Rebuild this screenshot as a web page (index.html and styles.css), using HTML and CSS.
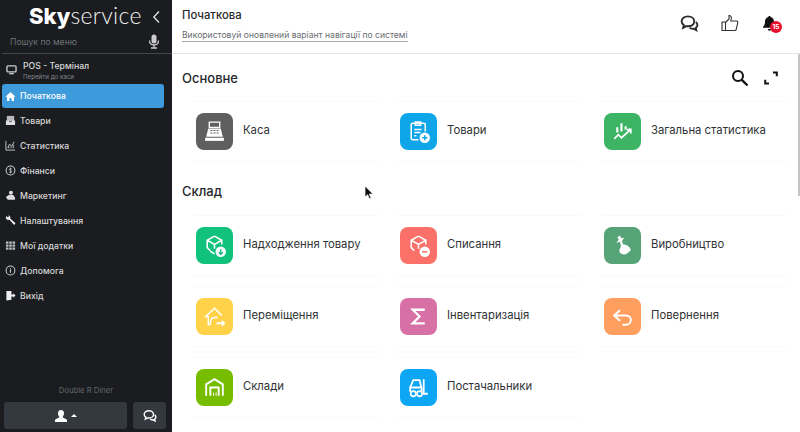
FILE: index.html
```html
<!DOCTYPE html>
<html lang="uk">
<head>
    <meta charset="UTF-8">
    <meta name="viewport" content="width=device-width, initial-scale=1.0">
    <title>Skyservice</title>
    <link rel="stylesheet" href="styles.css">
</head>
<body>
    <aside class="sidebar">
        <div class="logo-row">
            <div class="logo"><b>Sky</b>service</div>
            <svg class="back" width="9" height="14" viewBox="0 0 9 14"><path d="M7 1.500 1.800 7 7 12.500" fill="none" stroke="#e8e8e8" stroke-width="1.300"/></svg>
        </div>
        <div class="search-row">
            <span>Пошук по меню</span>
            <svg width="12" height="15" viewBox="0 0 12 15"><rect x="3.500" y="0.500" width="5" height="9" rx="2.500" fill="#ccc"/><path d="M1.500 6.500c0 6 9 6 9 0M6 11v2.500M3 14h6" fill="none" stroke="#ccc" stroke-width="1.300"/></svg>
        </div>
        <div class="pos-row">
            <svg class="pos-icon" width="11" height="10" viewBox="0 0 12 11"><rect x="1" y="1" width="10" height="6.500" rx="1" fill="none" stroke="#ccc" stroke-width="1.500"/><path d="M3.500 9.500h5" stroke="#ccc" stroke-width="1.500"/></svg>
            <div>
                <div class="pos-title">POS - Термінал</div>
                <div class="pos-sub">Перейти до каси</div>
            </div>
        </div>
        <nav class="menu">
            <a class="menu-item active">
                <svg viewBox="0 0 12 12"><path d="M6 1 .5 6.200h1.700V11h2.600V7.800h2.400V11h2.600V6.200h1.700z" fill="#fff"/></svg>
                Початкова
            </a>
            <a class="menu-item">
                <svg viewBox="0 0 12 12"><path d="M2 1h8v6H2z" fill="#bbb"/><path d="M1 6h3l1 1.500h2L8 6h3v5H1z" fill="#ddd"/></svg>
                Товари
            </a>
            <a class="menu-item">
                <svg viewBox="0 0 12 12"><path d="M1 1v10h10M3 8.500l2-4 2 2.500 3-5M4 9V7M6.500 9V7.500M9 9V5" fill="none" stroke="#ccc" stroke-width="1"/></svg>
                Статистика
            </a>
            <a class="menu-item">
                <svg viewBox="0 0 12 12"><circle cx="6" cy="6" r="4.800" fill="none" stroke="#ccc" stroke-width="1.100"/><path d="M7.500 4.400C7 3.700 4.700 3.600 4.700 4.800S7.400 5.900 7.400 7.200 5 8.400 4.400 7.500M6 2.800v6.400" fill="none" stroke="#ccc" stroke-width=".8"/></svg>
                Фінанси
            </a>
            <a class="menu-item">
                <svg viewBox="0 0 12 12"><circle cx="6.500" cy="3" r="2.200" fill="#ddd"/><path d="M1 7.500 4 5.500h5l2 3v2H3z" fill="#ddd"/></svg>
                Маркетинг
            </a>
            <a class="menu-item">
                <svg viewBox="0 0 12 12"><path d="M.8 3.500 1.500 1 3 2.500l1.300-.7L3.500.5l1.500.2 1 1.800-.3 1.300 5.800 5.200L10 11 4.800 5.300l-2 .2z" fill="#eee"/></svg>
                Налаштування
            </a>
            <a class="menu-item">
                <svg viewBox="0 0 12 12"><path d="M1 1.500h2.800v2.500H1zM4.600 1.500h2.800v2.500H4.600zM8.200 1.500H11v2.500H8.200zM1 4.800h2.800v2.500H1zM4.600 4.800h2.800v2.500H4.600zM8.200 4.800H11v2.500H8.200zM1 8.100h2.800v2.500H1zM4.600 8.100h2.800v2.500H4.600zM8.200 8.100H11v2.500H8.200z" fill="#bbb"/></svg>
                Мої додатки
            </a>
            <a class="menu-item">
                <svg viewBox="0 0 12 12"><circle cx="6" cy="6" r="4.800" fill="none" stroke="#ccc" stroke-width="1.100"/><path d="M6 5v3.500M6 3.200v1" stroke="#ccc" stroke-width="1.200"/></svg>
                Допомога
            </a>
            <a class="menu-item">
                <svg viewBox="0 0 12 12"><path d="M1.500 1H7v4h2V3.500L11.500 6 9 8.500V7H7v3.500L1.500 11.500z" fill="#eee"/></svg>
                Вихід
            </a>
        </nav>
        <div class="company">Double R Diner</div>
        <div class="bottom-row">
            <div class="user-btn">
                <svg width="14" height="14" viewBox="0 0 14 14"><path d="M7 1c2 0 3 1.500 3 3.200S9 7.500 8.500 8c0 1 4.500 1.500 4.500 3.500V13H1v-1.500C1 9.500 5.500 9 5.500 8 5 7.500 4 6 4 4.200S5 1 7 1z" fill="#fff"/></svg>
                <span class="caret"></span>
            </div>
            <div class="chat-btn">
                <svg width="14" height="14" viewBox="0 0 24 24"><path d="M10 3c4.500 0 8 2.700 8 6.300s-3.500 6.200-8 6.200c-.8 0-1.500 0-2.200-.2L4 17.500l.8-3.500C3 12.800 2 11.200 2 9.300 2 5.700 5.500 3 10 3zM20 10c1.300 1 2 2.300 2 3.800 0 1.500-.8 2.800-2 3.700l.6 3-3.600-2c-2 .2-3.800-.3-5-1.300" fill="none" stroke="#fff" stroke-width="2.400"/></svg>
            </div>
        </div>
    </aside>

    <main class="main">
        <header class="topbar">
            <div>
                <div class="page-title">Початкова</div>
                <a class="page-link">Використовуй оновлений варіант навігації по системі</a>
            </div>
            <div class="top-icons">
                <svg width="19" height="19" viewBox="0 0 24 24"><path d="M10 3c4.500 0 8 2.700 8 6.300s-3.500 6.200-8 6.200c-.8 0-1.500 0-2.200-.2L4 17.500l.8-3.500C3 12.800 2 11.200 2 9.300 2 5.700 5.500 3 10 3zM20 10c1.300 1 2 2.300 2 3.800 0 1.500-.8 2.800-2 3.700l.6 3-3.600-2c-2 .2-3.800-.3-5-1.300" fill="none" stroke="#2a2a2a" stroke-width="2.400"/></svg>
                <svg width="18" height="18" viewBox="0 0 18 18"><path d="M1 8h3.500v8.500H1zM4.500 8.500 8 5V1.500c2 0 2.500 1.500 2.300 3L9.800 7H15.500c1 0 1.500 1 1.200 2l-1.500 6.500c-.2.700-.7 1-1.400 1H4.500" fill="none" stroke="#333" stroke-width="1.100"/></svg>
                <div class="bell">
                    <svg width="15" height="16" viewBox="0 0 15 16"><path d="M7.500 1c.8 0 1.200.5 1.200 1 2.300.6 3.300 2.500 3.300 4.800 0 3 1 4 2 5v1H1v-1c1-1 2-2 2-5 0-2.300 1-4.200 3.300-4.800 0-.5.400-1 1.200-1zM5.800 14h3.400c0 1-.8 1.700-1.700 1.700S5.800 15 5.800 14z" fill="#111"/></svg>
                    <span class="badge">15</span>
                </div>
            </div>
        </header>

        <section class="content">
            <div class="section-head">
                <h2>Основне</h2>
                <div class="section-tools">
                    <svg width="18" height="18" viewBox="0 0 18 18"><circle cx="7" cy="7" r="5" fill="none" stroke="#111" stroke-width="2"/><path d="m10.800 10.800 5.700 5.700" stroke="#111" stroke-width="2.400"/></svg>
                    <svg width="14" height="14" viewBox="0 0 14 14"><path d="M9 1.500h3.800v3.800M1.200 8.700v3.800H5" fill="none" stroke="#111" stroke-width="2"/></svg>
                </div>
            </div>
            <div class="tile-grid">
                <div class="tile">
                    <div class="tile-icon grey"><svg viewBox="0 0 24 24"><path d="M7 3h10v5H7z" fill="none" stroke="#fff" stroke-width="1.300"/><path d="M6 9h12l2 8H4z" fill="#fff"/><path d="M3 18h18v3H3z" fill="#fff"/><path d="M8 11h2M11 11h2M14 11h2M8 13.500h2M11 13.500h2M14 13.500h2" stroke="#666" stroke-width="1"/></svg></div>
                    <span class="tile-label">Каса</span>
                </div>
                <div class="tile">
                    <div class="tile-icon sky"><svg viewBox="0 0 24 24"><path d="M12 20H6.500A1.500 1.500 0 0 1 5 18.500v-13A1.500 1.500 0 0 1 6.500 4H17a1.500 1.500 0 0 1 1.500 1.500V12M9 3h5v3H9zM8 10h7M8 13h6M8 16h2" fill="none" stroke="#fff" stroke-width="1.500"/><circle cx="18" cy="18" r="5" fill="#fff"/><path d="M18 15.500v5M15.500 18h5" stroke="#0ea5e9" stroke-width="1.400"/></svg></div>
                    <span class="tile-label">Товари</span>
                </div>
                <div class="tile">
                    <div class="tile-icon green"><svg viewBox="0 0 24 24"><path d="M7 8v5M11 4v8M15 7v3M19 9v3" stroke="#fff" stroke-width="2"/><path d="m4 19 4-4 3 3 8-7M16 10.500l4-.5v4" fill="none" stroke="#fff" stroke-width="1.600"/></svg></div>
                    <span class="tile-label">Загальна статистика</span>
                </div>
            </div>

            <h2 class="second-head">Склад</h2>
            <div class="tile-grid">
                <div class="tile">
                    <div class="tile-icon mint"><svg viewBox="0 0 24 24"><path d="M12 3 5 7v7l3 3M12 3l7 4v4M5 7l7 4 7-4M12 11v4" fill="none" stroke="#fff" stroke-width="1.500"/><path d="M8 17.500 12 20" stroke="#fff" stroke-width="1.500"/><circle cx="18" cy="18" r="5" fill="#fff"/><path d="M18 15.500v5M16 18.500l2 2 2-2" fill="none" stroke="#10b981" stroke-width="1.300"/></svg></div>
                    <span class="tile-label">Надходження товару</span>
                </div>
                <div class="tile">
                    <div class="tile-icon coral"><svg viewBox="0 0 24 24"><path d="M12 3 5 7v7l3 3M12 3l7 4v4M5 7l7 4 7-4M12 11v4" fill="none" stroke="#fff" stroke-width="1.500"/><circle cx="18" cy="18" r="5" fill="#fff"/><path d="M15.500 18h5" stroke="#fb7169" stroke-width="1.500"/></svg></div>
                    <span class="tile-label">Списання</span>
                </div>
                <div class="tile">
                    <div class="tile-icon forest"><svg viewBox="0 0 24 24"><path d="m7 4 2.500-1.500L11 5l2.500-.5L11.500 8l1.300 3c3.700 0 6.700 2.500 7.200 5.500L15.500 20.500c-3 .5-6.500-.5-6.500-3.500 0-2 1.500-3 1.500-4.500L9.500 8.500 6 9.500l2.500-3z" fill="#fff"/></svg></div>
                    <span class="tile-label">Виробництво</span>
                </div>
                <div class="tile">
                    <div class="tile-icon yellow"><svg viewBox="0 0 24 24"><path d="M8 20H6v-8H3.500L12 4l7 7M8 20c-.500-4 1-7 4-7h3" fill="none" stroke="#fff" stroke-width="1.400"/><path d="M14 17.500h5v-2.500l3.500 3.500-3.500 3.500v-2.500h-5z" fill="#fff"/></svg></div>
                    <span class="tile-label">Переміщення</span>
                </div>
                <div class="tile">
                    <div class="tile-icon pink"><svg viewBox="0 0 24 24"><path d="M18 5.500H6.500L13 12l-6.500 6.500H18" fill="none" stroke="#fff" stroke-width="2.200"/></svg></div>
                    <span class="tile-label">Інвентаризація</span>
                </div>
                <div class="tile">
                    <div class="tile-icon orange"><svg viewBox="0 0 24 24"><path d="M9.500 6 4 11l5.500 5M4.500 11H15c3 0 5 1.800 5 4.300S18 20 15 20h-3" fill="none" stroke="#fff" stroke-width="1.900"/></svg></div>
                    <span class="tile-label">Повернення</span>
                </div>
                <div class="tile">
                    <div class="tile-icon lime"><svg viewBox="0 0 24 24"><path d="M4 20V9l8-5 8 5v11M8 20v-8h8v8" fill="none" stroke="#fff" stroke-width="1.800"/><path d="M10.500 17h1v3h-1zM13 17h1v3h-1z" fill="#fff"/></svg></div>
                    <span class="tile-label">Склади</span>
                </div>
                <div class="tile">
                    <div class="tile-icon blue"><svg viewBox="0 0 24 24"><path d="M4 16v-4l3-7h6l2 8v3M5 12h9M17 4v14h4" fill="none" stroke="#fff" stroke-width="1.700"/><circle cx="7" cy="18" r="2.500" fill="none" stroke="#fff" stroke-width="1.500"/><circle cx="13" cy="18" r="2.500" fill="none" stroke="#fff" stroke-width="1.500"/></svg></div>
                    <span class="tile-label">Постачальники</span>
                </div>
            </div>
        </section>
        <div class="scroll-thumb"></div>
    </main>

    <svg class="pointer" width="10" height="15" viewBox="0 0 10 15"><path d="M1 1v11l2.600-2.300 1.800 4 1.700-.8-1.800-3.800H9z" fill="#111" stroke="#fff" stroke-width=".7"/></svg>
</body>
</html>
```

FILE: styles.css
```css
* {
    box-sizing: border-box;
}

body {
    margin: 0;
    width: 800px;
    height: 432px;
    display: flex;
    overflow: hidden;
    background-color: #fff;
    font-family: Inter, "Noto Sans", sans-serif;
    color: #26282b;
}

.sidebar {
    width: 172px;
    height: 432px;
    flex-shrink: 0;
    display: flex;
    flex-direction: column;
    background-color: #1a1c20;
    color: #d8d8d8;
}

.logo-row {
    height: 30px;
    padding: 0 11px 0 29px;
    display: flex;
    align-items: center;
    justify-content: space-between;
}

.logo {
    margin-top: -1px;
    font-family: Lato, sans-serif;
    font-size: 23px;
    font-weight: 300;
    letter-spacing: 0.3px;
    color: #f2f2f2;
}

.logo b {
    font-family: Inter, sans-serif;
    font-size: 22px;
    font-weight: 800;
    letter-spacing: 0;
    color: #fff;
}

.back {
    margin-top: 4px;
}

.search-row {
    height: 24px;
    margin: 0 0 0 2px;
    padding: 0 12px 0 8px;
    display: flex;
    align-items: center;
    justify-content: space-between;
    border-bottom: 1px solid #44474b;
    font-size: 8.600px;
    color: #6e7276;
}

.pos-row {
    height: 28px;
    padding: 7px 0 0 6px;
    display: flex;
    align-items: flex-start;
    gap: 6px;
}

.pos-icon {
    margin-top: 4px;
}

.pos-title {
    font-size: 8.700px;
    font-weight: 500;
    line-height: 11px;
    color: #d8d8d8;
}

.pos-sub {
    margin-top: 1px;
    font-size: 6.200px;
    line-height: 8px;
    color: #85888c;
}

.menu {
    display: flex;
    flex-direction: column;
    padding: 0 8px 0 2px;
}

.menu-item {
    height: 25px;
    padding-left: 3px;
    display: flex;
    align-items: center;
    gap: 4px;
    border-radius: 3px;
    font-size: 8.700px;
    font-weight: 500;
    color: #d8d8d8;
}

.menu-item svg {
    width: 11px;
    height: 11px;
}

.menu-item.active {
    height: 24px;
    margin-top: 2px;
    background-color: #3d9bdc;
    color: #fff;
}

.company {
    margin-top: auto;
    text-align: center;
    font-size: 7.700px;
    color: #63676b;
}

.bottom-row {
    margin: 7px 6px 3px 4px;
    display: flex;
    gap: 6px;
}

.user-btn,
.chat-btn {
    height: 27px;
    display: flex;
    align-items: center;
    justify-content: center;
    border-radius: 3px;
    background-color: #34393f;
}

.user-btn {
    flex: 1;
    gap: 3px;
}

.chat-btn {
    width: 33px;
}

.caret {
    width: 0;
    height: 0;
    border-left: 3px solid transparent;
    border-right: 3px solid transparent;
    border-bottom: 3px solid #fff;
}

.main {
    position: relative;
    flex: 1;
    height: 432px;
}

.topbar {
    height: 54px;
    padding: 8px 21px 0 10px;
    display: flex;
    justify-content: space-between;
    border-bottom: 1px solid #e6e6e6;
}

.page-title {
    font-size: 11.300px;
    line-height: 14px;
    font-weight: 500;
    color: #26282b;
}

.page-link {
    display: inline-block;
    margin-top: 6px;
    font-size: 8.600px;
    line-height: 11px;
    color: #6a6d70;
    border-bottom: 1px solid #a8a8a8;
}

.top-icons {
    display: flex;
    align-items: center;
    gap: 22px;
    height: 30px;
}

.bell {
    position: relative;
    width: 17px;
    height: 17px;
    margin-left: 1px;
}

.badge {
    position: absolute;
    left: 8px;
    top: 6px;
    width: 12px;
    height: 12px;
    border-radius: 50%;
    background-color: #e8112d;
    color: #fff;
    font-size: 6.500px;
    font-weight: 700;
    line-height: 12px;
    text-align: center;
}

.content {
    padding: 0 0 0 10px;
}

.section-head {
    height: 42px;
    padding: 6px 22px 0 0;
    display: flex;
    align-items: center;
    justify-content: space-between;
}

h2 {
    margin: 0;
    font-size: 13px;
    font-weight: 500;
    color: #26282b;
}

.section-tools {
    display: flex;
    align-items: center;
    gap: 15px;
}

.second-head {
    height: 37px;
    margin-top: 6px;
    line-height: 37px;
}

.tile-grid {
    display: grid;
    grid-template-columns: repeat(3, 204px);
}

.tile {
    height: 61px;
    margin: 5px 8px 5px 11px;
    padding-left: 3px;
    display: flex;
    align-items: center;
    gap: 10px;
    white-space: nowrap;
    border-top: 1px solid #fafafa;
    border-bottom: 1px solid #fafafa;
}

.tile-label {
    margin-bottom: 4px;
    font-size: 11.300px;
    color: #303235;
}

.tile-icon {
    width: 37px;
    height: 37px;
    padding: 6px;
    border-radius: 8px;
    flex-shrink: 0;
}

.tile-icon svg {
    display: block;
    width: 25px;
    height: 25px;
}

.grey { background-color: #5f5f5f; }
.sky { background-color: #0ea5e9; }
.green { background-color: #3cb464; }
.mint { background-color: #10c27c; }
.coral { background-color: #fb7169; }
.forest { background-color: #55a377; }
.yellow { background-color: #ffd24a; }
.pink { background-color: #d770a4; }
.orange { background-color: #ff9f5f; }
.lime { background-color: #76bd00; }
.blue { background-color: #0da6f5; }

.scroll-thumb {
    position: absolute;
    right: 0;
    top: 54px;
    width: 2px;
    height: 142px;
    background-color: #c4c4c4;
}

.pointer {
    position: absolute;
    left: 364px;
    top: 185px;
}
```
